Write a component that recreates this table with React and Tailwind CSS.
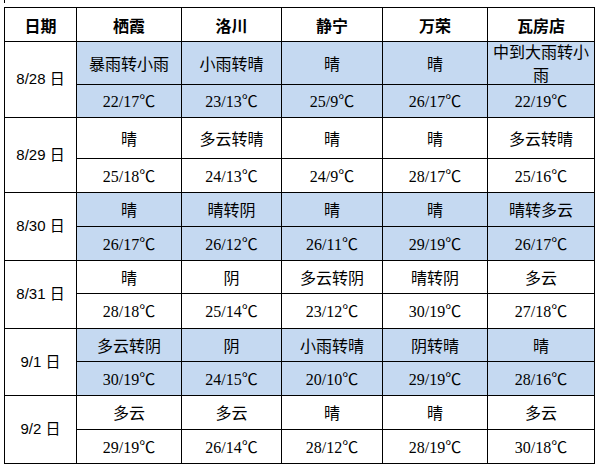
import React from "react";

const headers = ["日期", "栖霞", "洛川", "静宁", "万荣", "瓦房店"];

const rows = [
  {
    date: "8/28 日",
    blue: true,
    w: ["暴雨转小雨", "小雨转晴", "晴", "晴", ["中到大雨转小", "雨"]],
    t: ["22/17", "23/13", "25/9", "26/17", "22/19"],
  },
  {
    date: "8/29 日",
    blue: false,
    w: ["晴", "多云转晴", "晴", "晴", "多云转晴"],
    t: ["25/18", "24/13", "24/9", "28/17", "25/16"],
  },
  {
    date: "8/30 日",
    blue: true,
    w: ["晴", "晴转阴", "晴", "晴", "晴转多云"],
    t: ["26/17", "26/12", "26/11", "29/19", "26/17"],
  },
  {
    date: "8/31 日",
    blue: false,
    w: ["晴", "阴", "多云转阴", "晴转阴", "多云"],
    t: ["28/18", "25/14", "23/12", "30/19", "27/18"],
  },
  {
    date: "9/1 日",
    blue: true,
    w: ["多云转阴", "阴", "小雨转晴", "阴转晴", "晴"],
    t: ["30/19", "24/15", "20/10", "29/19", "28/16"],
  },
  {
    date: "9/2 日",
    blue: false,
    w: ["多云", "多云", "晴", "晴", "多云"],
    t: ["29/19", "26/14", "28/12", "28/19", "30/18"],
  },
];

export default function App() {
  return (
    <div className="w-[600px] h-[466px] bg-white overflow-hidden text-black">
      <div className="ml-[4px] w-px h-[3px] bg-black" />
      <div className="ml-[4px] mt-[4px] w-[591px] p-px bg-black grid gap-px grid-cols-[71px_104px_99px_100px_104px_106px] grid-rows-[33px_42px_32px_40px_33px_33px_33px_32px_34px_32px_33px_33px_33px]">
        {headers.map((h) => (
          <div
            key={h}
            className="bg-white flex items-center justify-center text-[16px] font-bold font-['Noto_Sans_CJK_SC',sans-serif]"
          >
            {h}
          </div>
        ))}
        {rows.map((r) => (
          <React.Fragment key={r.date}>
            <div className="row-span-2 bg-white flex items-center justify-center text-[15px] font-['Liberation_Sans','Noto_Sans_CJK_SC',sans-serif]">
              {r.date}
            </div>
            {r.w.map((w, i) => (
              <div
                key={"w" + i}
                className={
                  r.blue
                    ? "bg-[#c5d9f1] flex items-center justify-center text-center text-[16px] leading-[23px] font-['Noto_Sans_CJK_SC',sans-serif]"
                    : "bg-white flex items-center justify-center text-center text-[16px] leading-[23px] font-['Noto_Sans_CJK_SC',sans-serif]"
                }
              >
                {Array.isArray(w) ? (
                  <span>
                    {w[0]}
                    <br />
                    {w[1]}
                  </span>
                ) : (
                  w
                )}
              </div>
            ))}
            {r.t.map((t, i) => (
              <div
                key={"t" + i}
                className={
                  r.blue
                    ? "bg-[#c5d9f1] flex items-center justify-center text-[16px]"
                    : "bg-white flex items-center justify-center text-[16px]"
                }
              >
                <span className="font-['Liberation_Serif',serif]">
                  {t}
                  <span className="font-['Noto_Sans_CJK_SC',sans-serif]">℃</span>
                </span>
              </div>
            ))}
          </React.Fragment>
        ))}
      </div>
    </div>
  );
}
